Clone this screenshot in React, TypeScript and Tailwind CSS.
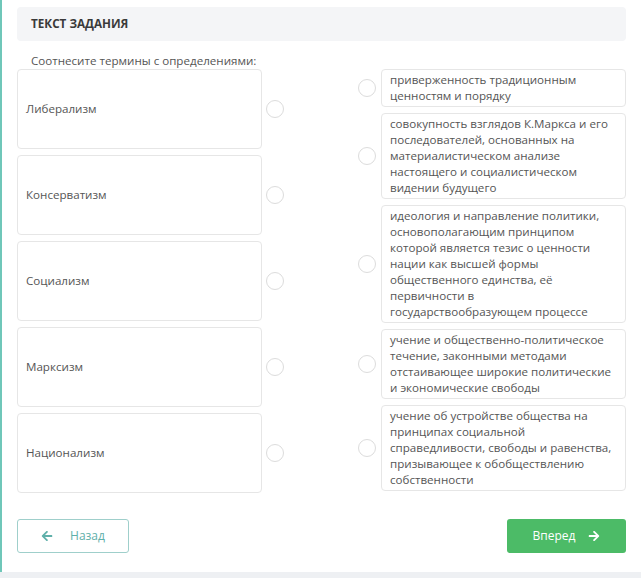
import React from "react";
import { FaArrowLeft, FaArrowRight } from "react-icons/fa";

const terms = ["Либерализм", "Консерватизм", "Социализм", "Марксизм", "Национализм"];
const defs = [
  ["приверженность традиционным", "ценностям и порядку"],
  ["совокупность взглядов К.Маркса и его", "последователей, основанных на", "материалистическом анализе", "настоящего и социалистическом", "видении будущего"],
  ["идеология и направление политики,", "основополагающим принципом", "которой является тезис о ценности", "нации как высшей формы", "общественного единства, её", "первичности в", "государствообразующем процессе"],
  ["учение и общественно-политическое", "течение, законными методами", "отстаивающее широкие политические", "и экономические свободы"],
  ["учение об устройстве общества на", "принципах социальной", "справедливости, свободы и равенства,", "призывающее к обобществлению", "собственности"],
];

function Radio() {
  return <div className="w-[18px] h-[18px] rounded-full border border-[#dcdcdc] bg-white shrink-0" />;
}

export default function App() {
  return (
    <div
      className="w-[641px] h-[578px] bg-white flex flex-col text-[#555]"
      style={{ fontFamily: '"Open Sans", "Noto Sans", sans-serif' }}
    >
      <div className="flex-1 border-l-2 border-[#6fc7b9] pl-[15px] pr-[15px] pt-[7px]">
        <div className="h-[34px] bg-[#f4f5f7] rounded-[4px] flex items-center pl-[14px] text-[11.7px] font-bold text-[#3a3a3a]">
          ТЕКСТ ЗАДАНИЯ
        </div>
        <div className="mt-[12px] pl-[14px] text-[11.6px] leading-[16px]">Соотнесите термины с определениями:</div>
        <div className="mt-[0px] flex justify-between">
          <div className="flex flex-col gap-[6px]">
            {terms.map((t) => (
              <div key={t} className="flex items-center gap-[4px]">
                <div className="w-[245px] h-[80px] border border-[#e6e6e6] rounded-[4px] bg-white flex items-center pl-[8px] text-[11.6px]">
                  {t}
                </div>
                <Radio />
              </div>
            ))}
          </div>
          <div className="flex flex-col gap-[6px]">
            {defs.map((lines, i) => (
              <div key={i} className="flex items-center gap-[5px]">
                <Radio />
                <div className="w-[245px] border border-[#e6e6e6] rounded-[4px] bg-white px-[8px] py-[2px] text-[11.6px] leading-[16px]">
                  {lines.map((l, j) => (
                    <div key={j} className="whitespace-nowrap">{l}</div>
                  ))}
                </div>
              </div>
            ))}
          </div>
        </div>
        <div className="mt-[26px] flex justify-between">
          <button className="w-[112px] h-[34px] border border-[#9fcfcb] rounded-[3px] bg-white flex items-center justify-center gap-[17px] text-[12px] text-[#5fb0aa]">
            <FaArrowLeft className="w-[12px] h-[12px]" />
            <span>Назад</span>
          </button>
          <button className="w-[119px] h-[34px] rounded-[3px] bg-[#4cbb67] flex items-center justify-center gap-[13px] text-[12px] text-white">
            <span>Вперед</span>
            <FaArrowRight className="w-[12px] h-[12px]" />
          </button>
        </div>
      </div>
      <div className="h-[6px] bg-[#eef0f3]" />
    </div>
  );
}
